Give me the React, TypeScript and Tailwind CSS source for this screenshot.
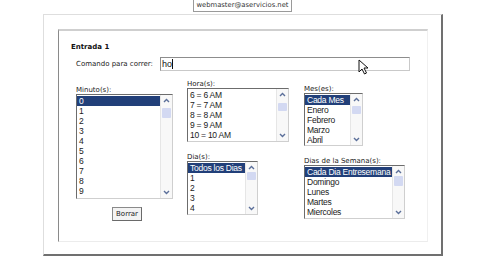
import React from 'react';

interface ListProps {
  items: string[];
  box: string;
  thumb: string;
  selected?: number;
}

const Chevron: React.FC<{ up?: boolean }> = ({ up }) => (
  <svg width="7" height="5" viewBox="0 0 7 5" className="shrink-0">
    <path
      d={up ? 'M1 4 L3.5 1.5 L6 4' : 'M1 1 L3.5 3.5 L6 1'}
      fill="none"
      stroke="#5b6f9a"
      strokeWidth="1.4"
    />
  </svg>
);

const ListBox: React.FC<ListProps> = ({ items, box, thumb, selected = 0 }) => (
  <div className={`flex border border-[#6c6c6c] border-r-[#cfcfcf] border-b-[#cfcfcf] bg-white ${box}`}>
    <div className="flex-1 overflow-hidden pt-px text-[8.5px] tracking-[-0.25px] text-[#1a1a1a] font-['Liberation_Sans',Arial,sans-serif]">
      {items.map((it, i) => (
        <div
          key={it}
          className={`h-[10px] leading-[10px] pl-[2px] whitespace-nowrap ${
            i === selected ? 'bg-[#213f79] text-white' : ''
          }`}
        >
          {it}
        </div>
      ))}
    </div>
    <div className="w-[12px] flex flex-col items-center border-l border-[#e6e6e6] bg-[#f8f8f8] py-[3px]">
      <Chevron up />
      <div className={`w-[9px] bg-[#d3d9f2] rounded-[1px] ${thumb}`} />
      <div className="flex-1" />
      <Chevron />
    </div>
  </div>
);

const Label: React.FC<{ children: React.ReactNode; className?: string }> = ({ children, className = '' }) => (
  <div className={`h-[8px] leading-[8px] text-[7px] text-[#222] ${className}`}>{children}</div>
);

export default function App() {
  const minutos = ['0', '1', '2', '3', '4', '5', '6', '7', '8', '9'];
  const horas = ['6 = 6 AM', '7 = 7 AM', '8 = 8 AM', '9 = 9 AM', '10 = 10 AM'];
  const dias = ['Todos los Dias', '1', '2', '3', '4'];
  const meses = ['Cada Mes', 'Enero', 'Febrero', 'Marzo', 'Abril'];
  const semana = ['Cada Dia Entresemana', 'Domingo', 'Lunes', 'Martes', 'Miercoles'];

  return (
    <div className="relative w-[480px] h-[270px] bg-white overflow-hidden font-['DejaVu_Sans',Verdana,sans-serif]">
      {/* contact */}
      <div className="ml-[193px] w-[99px] h-[12px] border border-[#9a9a9a] border-t-0 flex items-center justify-center">
        <div className="text-[6.8px] leading-[11px] text-[#333] whitespace-nowrap">webmaster@aservicios.net</div>
      </div>

      {/* outer panel */}
      <div className="ml-[43px] mt-[2px] w-[400px] h-[242px] border border-[#dedede] border-r-[#707070] border-b-[#707070] border-r-2 border-b-2 pl-[14px] pt-[14px]">
        <div className="w-[370px] h-[213px] border-t-2 border-t-[#cfcfcf] border-l border-l-[#8a8a8a] border-r border-r-[#f0f0f0] border-b border-b-[#ececec]">
          <div className="pl-[12px] pt-[12px] h-[20px] leading-[8px] text-[7px] font-bold text-[#111]">Entrada 1</div>

          <div className="flex items-center pl-[17px] mt-[6px]">
            <div className="w-[84px] text-[7px] leading-[8px] text-[#222]">Comando para correr:</div>
            <div className="w-[250px] h-[14px] border border-[#8d8d8d] border-r-[#c9c9c9] border-b-[#c9c9c9] bg-white flex items-center pl-px">
              <span className="text-[9px] leading-[10px] text-[#111] font-['Liberation_Sans',Arial,sans-serif]">ho</span>
              <span className="w-px h-[10px] bg-[#111]" />
            </div>
          </div>

          <div className="flex pl-[17px] mt-[9px]">
            <div className="w-[97px] pt-[6px]">
              <Label>Minuto(s):</Label>
              <ListBox items={minutos} box="w-[97px] h-[105px]" thumb="mt-[5px] h-[10px]" />
              <button className="ml-[36px] mt-[8px] w-[30px] h-[14px] border border-[#8a8a8a] border-r-[#6a6a6a] border-b-[#6a6a6a] bg-[#f3f3f3] text-[7px] leading-[12px] text-[#222]">
                Borrar
              </button>
            </div>

            <div className="ml-[14px] w-[102px]">
              <Label>Hora(s):</Label>
              <ListBox items={horas} box="w-[102px] h-[54px]" thumb="mt-[6px] h-[8px]" selected={-1} />
              <Label className="mt-[11px]">Dia(s):</Label>
              <ListBox items={dias} box="w-[71px] h-[54px]" thumb="mt-[2px] h-[8px]" />
            </div>

            <div className="ml-[15px] w-[101px] pt-[5px]">
              <Label>Mes(es):</Label>
              <ListBox items={meses} box="w-[59px] h-[53px]" thumb="mt-[4px] h-[8px]" />
              <Label className="mt-[11px]">Dias de la Semana(s):</Label>
              <ListBox items={semana} box="w-[101px] h-[54px]" thumb="mt-[2px] h-[10px]" />
            </div>
          </div>
        </div>
      </div>

      {/* mouse pointer */}
      <svg className="absolute left-[358px] top-[59px]" width="11" height="16" viewBox="0 0 11 16">
        <path d="M1 1 L1 13 L4 10 L6.5 15 L8.5 14 L6 9 L10 9 Z" fill="#fff" stroke="#111" strokeWidth="1" strokeLinejoin="round" />
      </svg>
    </div>
  );
}
